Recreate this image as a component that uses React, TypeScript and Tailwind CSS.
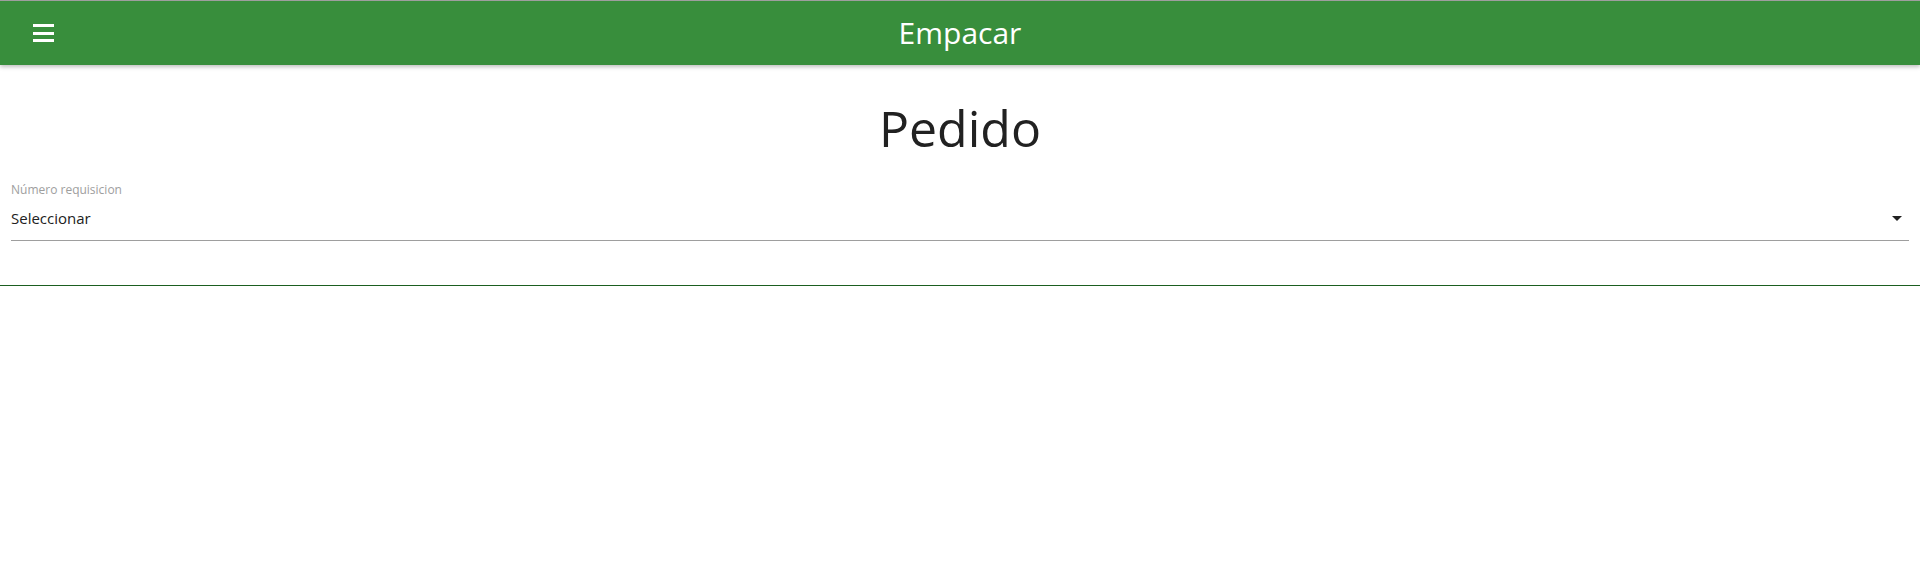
import React from 'react';

const App: React.FC = () => {
  return (
    <div className="min-h-screen bg-white font-['Open_Sans',sans-serif]">
      {/* Top bar */}
      <header className="relative z-10 h-[65px] border-t border-[#9e9e9e] bg-[#388e3c] flex items-center shadow-[0_2px_4px_rgba(0,0,0,0.25)]">
        <button className="ml-[33px] w-[21px] h-[18px] flex flex-col justify-between">
          <span className="block h-[3px] w-full bg-white" />
          <span className="block h-[3px] w-full bg-white" />
          <span className="block h-[3px] w-full bg-white" />
        </button>
        <h1 className="absolute left-1/2 -translate-x-1/2 top-[12px] text-[30px] leading-[40px] text-white">Empacar</h1>
      </header>

      {/* Content */}
      <div className="border-b border-[#1b5e20]">
        <h2 className="text-center text-[50px] leading-[68px] mt-[29px] text-[#212121]">Pedido</h2>
        <div className="px-[11px] pt-[20px] pb-[44px]">
          <label className="block text-[12px] leading-[16px] text-[#9e9e9e]">Número requisicion</label>
          <div className="h-[43px] pt-[9px] border-b border-[#9e9e9e]">
            <div className="flex items-center justify-between h-[22px]">
              <span className="text-[15px] leading-[22px] text-[#212121]">Seleccionar</span>
              <svg width="10" height="5" viewBox="0 0 10 5" className="mr-[7px]">
                <path d="M0 0h10L5 5z" fill="#212121" />
              </svg>
            </div>
          </div>
        </div>
      </div>
    </div>
  );
};

export default App;
